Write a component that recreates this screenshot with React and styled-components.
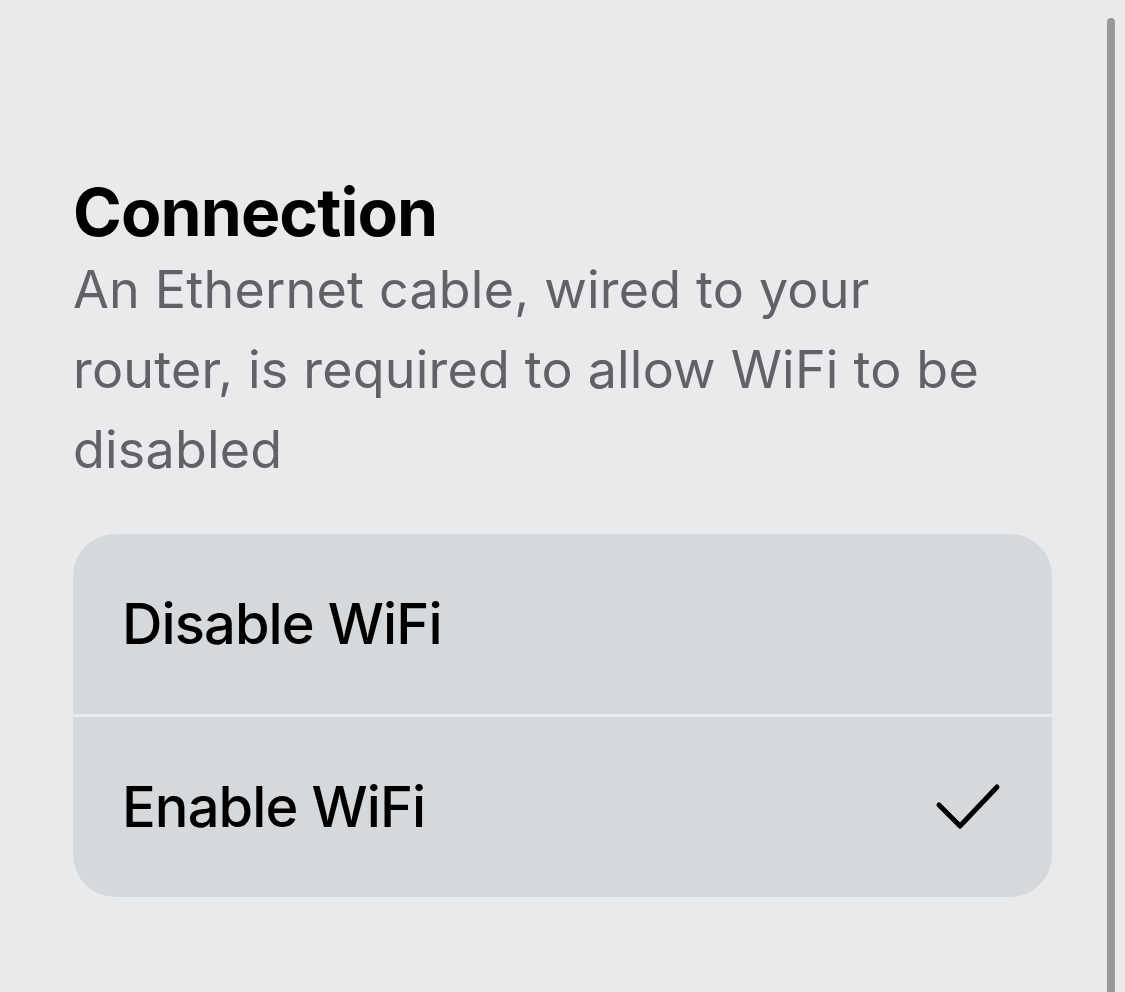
import React from 'react'
import styled, { createGlobalStyle } from 'styled-components'

const Global = createGlobalStyle`
  html, body {
    margin: 0;
    padding: 0;
    background: #e9eaec;
    font-family: Inter, "Noto Sans", sans-serif;
    -webkit-font-smoothing: antialiased;
  }
`

const Screen = styled.div`
  position: relative;
  width: 1125px;
  height: 992px;
  overflow: hidden;
  background: #e9eaec;
`

const Content = styled.section`
  display: flex;
  flex-direction: column;
  padding: 174px 73px 0 73px;
  width: 979px;
`

const Title = styled.h1`
  margin: 0;
  font-size: 66px;
  line-height: 76px;
  font-weight: 700;
  letter-spacing: -0.9px;
  color: #000;
`

const Description = styled.p`
  margin: 0;
  max-width: 920px;
  font-size: 52px;
  line-height: 80px;
  font-weight: 400;
  letter-spacing: 0.2px;
  color: #606267;
`

const Group = styled.div`
  margin-top: 44px;
  display: flex;
  flex-direction: column;
  gap: 3px;
  background: #e9eaec;
  border-radius: 42px;
  overflow: hidden;
`

const Row = styled.div`
  display: flex;
  align-items: center;
  justify-content: space-between;
  height: 180px;
  flex-shrink: 0;
  padding: 0 50px 0 49px;
  background: #d6d9dc;
  font-size: 56px;
  font-weight: 500;
  letter-spacing: -0.9px;
  color: #000;
`

const Scrollbar = styled.div`
  position: absolute;
  top: 18px;
  right: 10px;
  width: 8px;
  bottom: 0;
  background: #99999b;
  border-radius: 4px 4px 0 0;
`

const Check = () => (
  <svg width="68" height="50" viewBox="0 0 68 50" fill="none">
    <path d="M5 23 L26 44 L63 5" stroke="#000" strokeWidth="5" strokeLinecap="round" strokeLinejoin="round" />
  </svg>
)

export default function App() {
  return (
    <Screen>
      <Global />
      <Content>
        <Title>Connection</Title>
        <Description>
          An Ethernet cable, wired to your router, is required to allow WiFi to be disabled
        </Description>
        <Group>
          <Row>Disable WiFi</Row>
          <Row>
            Enable WiFi
            <Check />
          </Row>
        </Group>
      </Content>
      <Scrollbar />
    </Screen>
  )
}
